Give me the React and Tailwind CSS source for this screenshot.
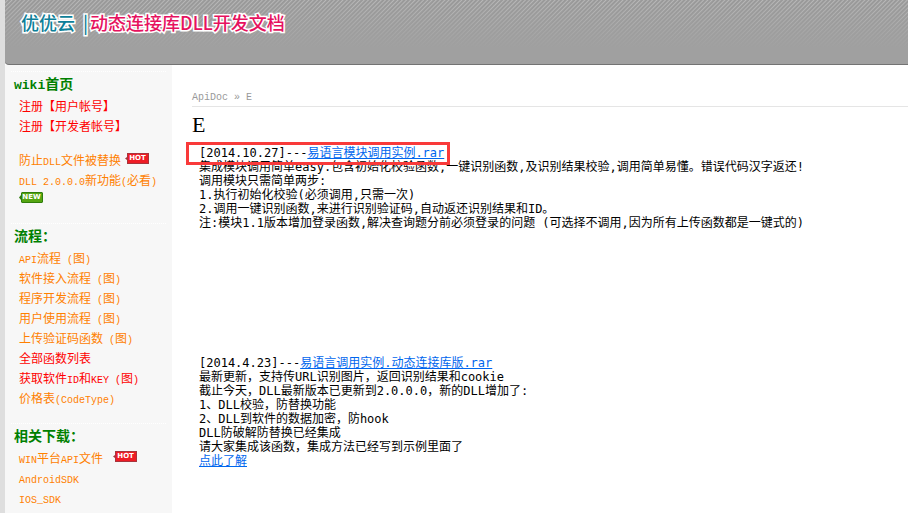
const sections = [
  {
    title: "wiki首页",
    groups: [
      [
        { label: "注册【用户帐号】", red: true },
        { label: "注册【开发者帐号】", red: true },
      ],
      [
        { label: "防止DLL文件被替换", badge: "HOT" },
        { label: "DLL 2.0.0.0新功能(必看)", badge: "NEW" },
      ],
    ],
  },
  {
    title: "流程：",
    groups: [
      [
        { label: "API流程 (图)" },
        { label: "软件接入流程 (图)" },
        { label: "程序开发流程 (图)" },
        { label: "用户使用流程 (图)" },
        { label: "上传验证码函数 (图)" },
        { label: "全部函数列表", red: true },
        { label: "获取软件ID和KEY (图)", red: true },
        { label: "价格表(CodeType)" },
      ],
    ],
  },
  {
    title: "相关下载：",
    groups: [
      [
        { label: "WIN平台API文件 ", badge: "HOT" },
        { label: "AndroidSDK" },
        { label: "IOS_SDK" },
      ],
    ],
  },
];

// Latin runs are set smaller so that two of them fill one Chinese character
function MixedText({ text, latin }) {
  return text.split(/([\x20-\x7e]+)/).map((part, i) =>
    /^[\x20-\x7e]/.test(part) ? (
      <span key={i} className={latin}>{part}</span>
    ) : (
      part
    )
  );
}

function Badge({ type }) {
  const isHot = type === "HOT";
  return (
    <span className="h-[18px] pt-0.5">
      <span className="relative flex h-[11px] w-6 items-center justify-center pl-px">
        <svg className="absolute inset-0" width="24" height="11" viewBox="0 0 24 11">
          {isHot ? (
            <>
              <path d="M0 5.5 2 4V0h22v11H2V7z" fill="#a8343c" />
              <path d="M3 1h20v9H3z" fill="#ee1c25" />
            </>
          ) : (
            <>
              <path d="M0 5.5 2 3V1l1-1h20l1 1v9l-1 1H3l-1-1V8z" fill="#2f7d0b" />
              <path d="M3 1h20v9H3z" fill="#55a512" />
            </>
          )}
        </svg>
        <span className="relative font-['DejaVu_Sans',sans-serif] text-[7px] leading-[11px] font-bold text-white">
          {type}
        </span>
      </span>
    </span>
  );
}

function Sidebar() {
  return (
    <nav className="w-[167px] shrink-0 bg-[#f7f7f7] px-1.5 pt-1.5">
      {sections.map((section) => (
        <section key={section.title} className="border-t border-dotted border-white pb-[15px]">
          <h2 className="h-[22px] pl-[3px] text-[14px] leading-[22px] font-bold text-[#008000]">
            <MixedText
              text={section.title}
              latin="font-['Liberation_Mono',monospace] text-[13px] leading-none"
            />
          </h2>
          <div className="mt-0.5 flex flex-col gap-[14px]">
            {section.groups.map((group, i) => (
              <ul key={i} className="pl-2">
                {group.map((item) => (
                  <li key={item.label} className="flex flex-wrap items-center gap-x-1">
                    <a
                      href="#"
                      className={
                        item.red
                          ? "h-5 leading-5 whitespace-pre text-[#ff0000]"
                          : "h-5 leading-5 whitespace-pre text-[#ff8000]"
                      }
                    >
                      <MixedText
                        text={item.label}
                        latin="font-['Liberation_Mono',monospace] text-[10px] leading-none"
                      />
                    </a>
                    {item.badge && <Badge type={item.badge} />}
                  </li>
                ))}
              </ul>
            ))}
          </div>
        </section>
      ))}
    </nav>
  );
}

function DocLink({ children }) {
  return (
    <a href="#" className="text-[#0066ee] underline">
      {children}
    </a>
  );
}

export default function App() {
  return (
    <div className="flex min-h-screen flex-col border-l-[5px] border-[#dedede] bg-white font-['Noto_Sans_CJK_SC',sans-serif] text-[12px] text-black">
      <header className="h-[65px] rounded-bl-[4px] border-b border-[#737373] bg-[linear-gradient(to_bottom,transparent,#a0a0a0_48px),repeating-linear-gradient(135deg,#999_0px,#999_1px,#b8b8b8_2px,#999_3px)] pt-2 pl-4">
        <h1 className="flex items-center text-[18px] leading-7 font-medium whitespace-pre [-webkit-text-stroke:3px_white] [paint-order:stroke]">
          <span className="text-[#0e7f99]">优优云</span>
          <span className="ml-2 text-[#0e7f99]">|</span>
          <span className="ml-0.5 text-[#e6125f]">动态连接库DLL开发文档</span>
        </h1>
      </header>

      <div className="flex grow">
        <Sidebar />

        <main className="min-w-0 grow pt-[25px] pl-5">
          <div className="border-b border-[#e5e5e5] font-['Liberation_Mono',monospace] text-[10px] leading-4 text-[#999]">
            <a href="#">ApiDoc</a> » E
          </div>
          <h2 className="pt-1 font-['Liberation_Serif',serif] text-[22px] leading-7">E</h2>

          <div className="pt-[7px] pl-[7px] font-['DejaVu_Sans_Mono','Noto_Sans_CJK_SC',monospace] leading-[14px]">
            <div className="relative">
              <p>
                [2014.10.27]---<DocLink>易语言模块调用实例.rar</DocLink>
              </p>
              <div className="absolute -top-1 -left-[13px] h-[23px] w-[264px] border-3 border-[#f93a3a]" />
            </div>
            <p>集成模块调用简单easy.包含初始化校验函数,一键识别函数,及识别结果校验,调用简单易懂。错误代码汉字返还!</p>
            <p>调用模块只需简单两步:</p>
            <p>1.执行初始化校验(必须调用,只需一次)</p>
            <p>2.调用一键识别函数,来进行识别验证码,自动返还识别结果和ID。</p>
            <p>注:模块1.1版本增加登录函数,解决查询题分前必须登录的问题 (可选择不调用,因为所有上传函数都是一键式的)</p>

            <div className="mt-[126px]">
              <p>
                [2014.4.23]---<DocLink>易语言调用实例.动态连接库版.rar</DocLink>
              </p>
              <p>最新更新，支持传URL识别图片，返回识别结果和cookie</p>
              <p>截止今天，DLL最新版本已更新到2.0.0.0，新的DLL增加了:</p>
              <p>1、DLL校验，防替换功能</p>
              <p>2、DLL到软件的数据加密，防hook</p>
              <p>DLL防破解防替换已经集成</p>
              <p>请大家集成该函数，集成方法已经写到示例里面了</p>
              <p>
                <DocLink>点此了解</DocLink>
              </p>
            </div>
          </div>
        </main>
      </div>
    </div>
  );
}
